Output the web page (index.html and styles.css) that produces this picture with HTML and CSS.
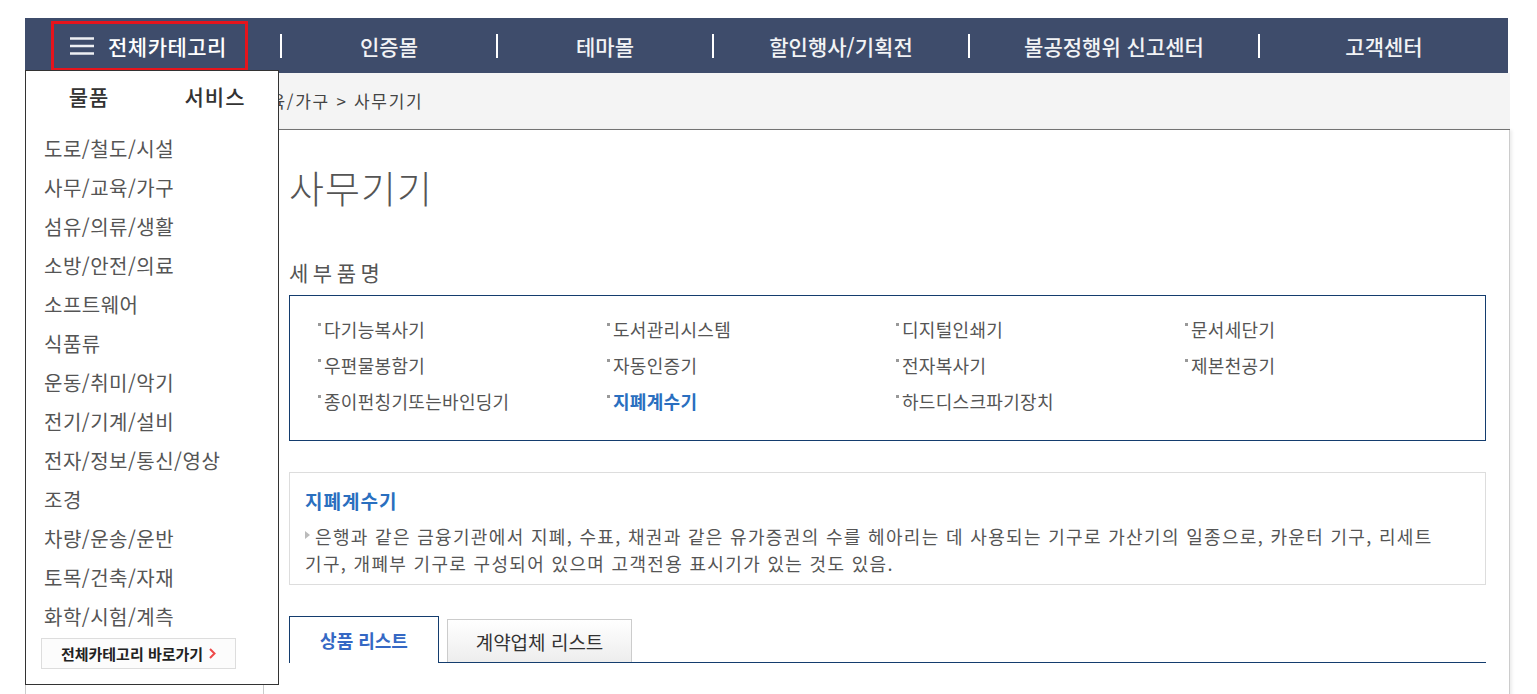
FILE: index.html
```html
<!DOCTYPE html>
<html lang="ko">
<head>
    <meta charset="UTF-8">
    <meta name="viewport" content="width=device-width, initial-scale=1.0">
    <title>사무기기</title>
    <link rel="stylesheet" href="styles.css">
</head>
<body>
<div class="page">

    <header class="gnb">
        <div class="gnb-all">
            <a class="all-btn" href="#">
                <svg width="24" height="18" viewBox="0 0 24 18"><path d="M0 1.5h24M0 9h24M0 16.5h24" stroke="#eef0f4" stroke-width="2.4" fill="none"/></svg>
                전체카테고리
            </a>
        </div>
        <span class="gnb-sep"></span>
        <a class="gnb-item w1" href="#">인증몰</a>
        <span class="gnb-sep"></span>
        <a class="gnb-item w1" href="#">테마몰</a>
        <span class="gnb-sep"></span>
        <a class="gnb-item w2" href="#">할인행사/기획전</a>
        <span class="gnb-sep"></span>
        <a class="gnb-item w3" href="#">불공정행위 신고센터</a>
        <span class="gnb-sep"></span>
        <a class="gnb-item w4" href="#">고객센터</a>
    </header>

    <div class="location">홈 &gt; 물품 &gt; 사무/교육/가구 &gt; 사무기기</div>

    <div class="main">
        <aside class="side"></aside>
        <section class="content">
            <h1 class="title">사무기기</h1>
            <h2 class="sub-title">세부품명</h2>

            <ul class="items">
                <li>다기능복사기</li>
                <li>도서관리시스템</li>
                <li>디지털인쇄기</li>
                <li>문서세단기</li>
                <li>우편물봉함기</li>
                <li>자동인증기</li>
                <li>전자복사기</li>
                <li>제본천공기</li>
                <li>종이펀칭기또는바인딩기</li>
                <li class="on">지폐계수기</li>
                <li>하드디스크파기장치</li>
            </ul>

            <div class="desc">
                <h3>지폐계수기</h3>
                <p><span class="arrow"></span>은행과 같은 금융기관에서 지폐, 수표, 채권과 같은 유가증권의 수를 헤아리는 데 사용되는 기구로 가산기의 일종으로, 카운터 기구, 리세트 기구, 개폐부 기구로 구성되어 있으며 고객전용 표시기가 있는 것도 있음.</p>
            </div>

            <div class="tabs">
                <a class="tab on" href="#">상품 리스트</a>
                <a class="tab" href="#">계약업체 리스트</a>
            </div>
        </section>
    </div>

    <div class="cat-menu">
        <div class="cat-tabs">
            <span>물품</span>
            <span>서비스</span>
        </div>
        <ul class="cat-list">
            <li>도로/철도/시설</li>
            <li>사무/교육/가구</li>
            <li>섬유/의류/생활</li>
            <li>소방/안전/의료</li>
            <li>소프트웨어</li>
            <li>식품류</li>
            <li>운동/취미/악기</li>
            <li>전기/기계/설비</li>
            <li>전자/정보/통신/영상</li>
            <li>조경</li>
            <li>차량/운송/운반</li>
            <li>토목/건축/자재</li>
            <li>화학/시험/계측</li>
        </ul>
        <a class="cat-all" href="#">전체카테고리 바로가기
            <svg width="7" height="11" viewBox="0 0 7 11"><path d="M1 1l4.5 4.5L1 10" stroke="#ee4a4a" stroke-width="2" fill="none"/></svg>
        </a>
    </div>

</div>
</body>
</html>
```

FILE: styles.css
```css
html, body {
    margin: 0;
    padding: 0;
    overflow: hidden;
}

body {
    font-family: "Noto Sans CJK KR", "Noto Sans", sans-serif;
    color: #555;
    background-color: #fff;
}

ul {
    list-style: none;
    margin: 0;
    padding: 0;
}

a {
    text-decoration: none;
}

.page {
    position: relative;
    width: 1485px;
    margin-left: 25px;
    padding-top: 18px;
}

/* top menu */
.gnb {
    display: flex;
    align-items: center;
    width: 1483px;
    height: 55px;
    background-color: #3e4c6b;
}

.gnb-all {
    display: flex;
    align-items: center;
    width: 255px;
    height: 100%;
}

.all-btn {
    display: flex;
    align-items: center;
    box-sizing: border-box;
    width: 197px;
    height: 50px;
    margin-left: 26px;
    padding-left: 16px;
    border: 3px solid #e6141c;
    color: #fff;
    font-size: 21px;
    letter-spacing: 0.5px;
    font-weight: 500;
}

.all-btn svg {
    margin-right: 14px;
}

.gnb-sep {
    width: 2px;
    height: 24px;
    background-color: #fff;
}

.gnb-item {
    text-align: center;
    color: #f2f3f5;
    font-size: 21px;
    font-weight: 500;
}

.w1 { width: 214px; }
.w2 { width: 254px; }
.w3 { width: 288px; }
.w4 { width: 248px; }

/* breadcrumb */
.location {
    height: 56px;
    line-height: 56px;
    padding-left: 84px;
    background-color: #f4f4f4;
    border-bottom: 1px solid #777;
    font-size: 17px;
    letter-spacing: 1.7px;
    color: #444;
}

.main {
    display: flex;
    height: 570px;
}

.side {
    box-sizing: border-box;
    width: 239px;
    border-left: 1px solid #ccc;
    border-right: 1px solid #ccc;
}

.content {
    flex: 1;
    padding: 35px 23px 0 25px;
    border-right: 1px solid #ccc;
    box-shadow: 2px 0 3px rgba(0, 0, 0, 0.08);
}

.title {
    margin: 0;
    font-size: 38px;
    line-height: 44px;
    letter-spacing: 1px;
    font-weight: 300;
    color: #555;
}

.sub-title {
    margin: 51px 0 11px;
    font-size: 21px;
    line-height: 24px;
    letter-spacing: 4.5px;
    font-weight: 400;
    color: #555;
}

.items {
    display: grid;
    grid-template-columns: repeat(4, 289px);
    padding: 15px 0 21px 28px;
    border: 1px solid #143d6e;
}

.items li {
    height: 36px;
    line-height: 36px;
    font-size: 18px;
    letter-spacing: 0.3px;
    color: #555;
}

.items li::before {
    content: "";
    display: inline-block;
    width: 3px;
    height: 3px;
    margin-right: 3px;
    background-color: #999;
    vertical-align: 11px;
}

.items li.on {
    color: #2a6fbf;
    font-weight: 700;
}

.desc {
    margin-top: 31px;
    padding: 15px 40px 7px 15px;
    border: 1px solid #ddd;
}

.desc h3 {
    margin: 0 0 9px;
    font-size: 19px;
    line-height: 26px;
    letter-spacing: 1px;
    color: #2a6fbf;
}

.desc p {
    margin: 0;
    font-size: 18px;
    line-height: 27px;
    letter-spacing: 1.33px;
    word-break: keep-all;
    color: #555;
}

.arrow {
    display: inline-block;
    width: 0;
    height: 0;
    margin-right: 5px;
    border-left: 5px solid #bbb;
    border-top: 4px solid transparent;
    border-bottom: 4px solid transparent;
    vertical-align: 5px;
}

.tabs {
    display: flex;
    align-items: flex-end;
    gap: 8px;
    height: 46px;
    margin-top: 31px;
    border-bottom: 1px solid #143d6e;
}

.tab {
    box-sizing: border-box;
    display: flex;
    align-items: center;
    justify-content: center;
    width: 185px;
    height: 43px;
    border: 1px solid #ccc;
    border-bottom: none;
    background: linear-gradient(#fff, #ededed);
    font-size: 19px;
    color: #333;
}

.tab.on {
    width: 150px;
    height: 47px;
    margin-bottom: -1px;
    border-color: #143d6e;
    background: #fff;
    font-size: 18px;
    color: #3568c4;
    font-weight: 700;
}

/* category dropdown */
.cat-menu {
    position: absolute;
    left: 0;
    top: 70px;
    box-sizing: border-box;
    width: 254px;
    height: 615px;
    border: 1px solid #333;
    background-color: #fff;
}

.cat-tabs {
    display: flex;
    height: 50px;
    align-items: center;
}

.cat-tabs span {
    flex: 1;
    text-align: center;
    font-size: 21px;
    letter-spacing: 1px;
    font-weight: 500;
    color: #333;
}

.cat-list {
    padding: 8px 0 0 18px;
}

.cat-list li {
    height: 39px;
    line-height: 39px;
    font-size: 20px;
    letter-spacing: 0.5px;
    color: #555;
}

.cat-all {
    display: flex;
    align-items: center;
    justify-content: center;
    gap: 6px;
    box-sizing: border-box;
    width: 195px;
    height: 31px;
    margin: 2px 0 0 15px;
    border: 1px solid #ddd;
    background-color: #fcfcfc;
    font-size: 15px;
    font-weight: 700;
    color: #222;
}
```
